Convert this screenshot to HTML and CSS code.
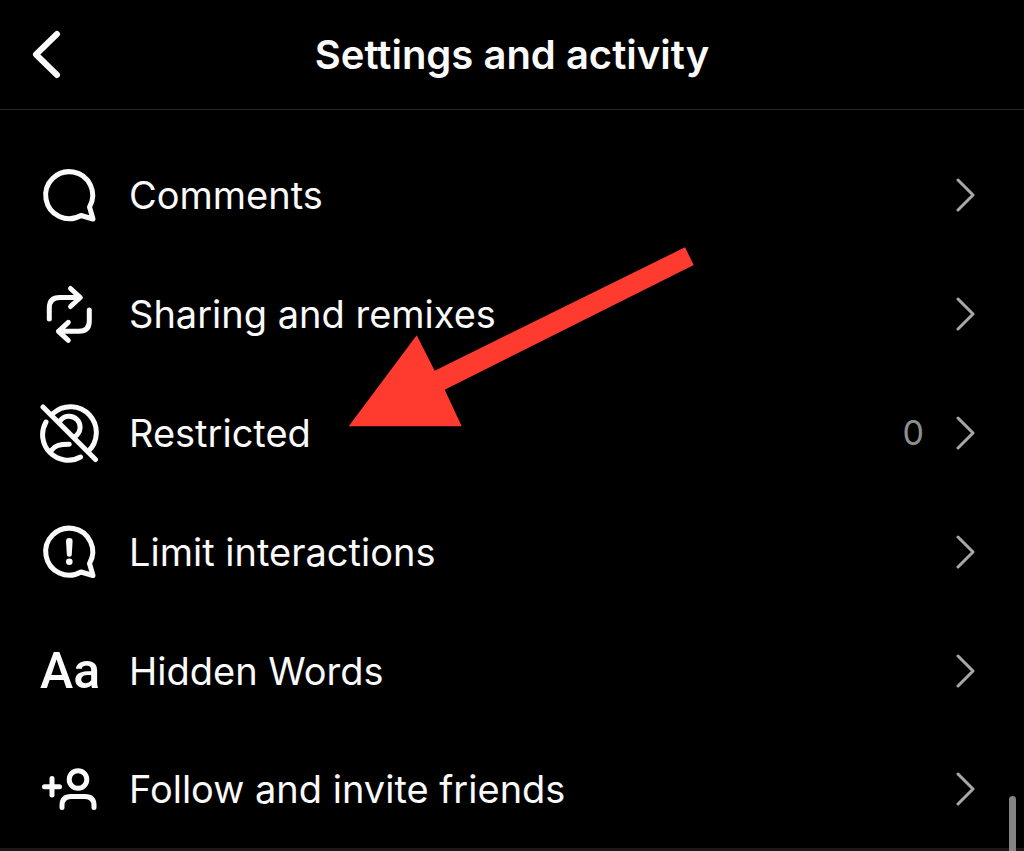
FILE: index.html
```html
<!DOCTYPE html>
<html lang="en">
<head>
<meta charset="utf-8">
<meta name="viewport" content="width=device-width, initial-scale=1">
<title>Settings and activity</title>
<link rel="stylesheet" href="styles.css">
</head>
<body class="page">
<header class="header">
  <button class="back" type="button" aria-label="Back">
    <svg class="back-icon" viewBox="0 0 34 50" aria-hidden="true"><path d="M27 4 6 24.5 27 45"/></svg>
  </button>
  <h1 class="title">Settings and activity</h1>
</header>
<main class="content">
  <ul class="list">
    <li><a class="row" href="#comments">
      <svg class="icon" viewBox="0 0 60 60" aria-hidden="true"><path d="M49.5 42A23.5 23.5 0 1 0 41 50.5L53 54Z"/></svg>
      <span class="label">Comments</span>
      <svg class="chevron" viewBox="0 0 20 36" aria-hidden="true"><path d="M3 3l15 15L3 33"/></svg>
    </a></li>
    <li><a class="row" href="#sharing">
      <svg class="icon" viewBox="0 0 60 60" aria-hidden="true"><path d="M9.3 35V24q0-10.500 10.500-10.500H40M30.500 4.500l9.800 9-9.800 9M49.300 26V37q0 10.300-10.300 10.300H18.500M28.300 38.300l-9.800 9 9.800 9"/></svg>
      <span class="label">Sharing and remixes</span>
      <svg class="chevron" viewBox="0 0 20 36" aria-hidden="true"><path d="M3 3l15 15L3 33"/></svg>
    </a></li>
    <li><a class="row" href="#restricted">
      <svg class="icon" viewBox="0 0 60 60" aria-hidden="true"><path d="M3 4 55.500 56.500M13 10.500A25.500 25.500 0 0 1 48 48.500M6 19A25.500 25.500 0 0 0 40.500 54M20 18A11 11 0 1 1 35 33.500M11.300 47.500C15 42.500 20 41.200 29.300 41.300"/></svg>
      <span class="label">Restricted</span>
      <span class="count">0</span>
      <svg class="chevron" viewBox="0 0 20 36" aria-hidden="true"><path d="M3 3l15 15L3 33"/></svg>
    </a></li>
    <li><a class="row" href="#limit">
      <svg class="icon" viewBox="0 0 60 60" aria-hidden="true"><path d="M49.500 41.500A23.500 23.500 0 1 0 41 50L53 53.500Z"/><path class="solid" d="M26 19.200a3.300 3.300 0 0 1 6.600 0l-.8 13a2.500 2.500 0 0 1-5 0Z"/><circle class="solid" cx="29.300" cy="39.700" r="3.300"/></svg>
      <span class="label">Limit interactions</span>
      <svg class="chevron" viewBox="0 0 20 36" aria-hidden="true"><path d="M3 3l15 15L3 33"/></svg>
    </a></li>
    <li><a class="row" href="#words">
      <span class="icon icon-text" aria-hidden="true">Aa</span>
      <span class="label">Hidden Words</span>
      <svg class="chevron" viewBox="0 0 20 36" aria-hidden="true"><path d="M3 3l15 15L3 33"/></svg>
    </a></li>
    <li><a class="row" href="#friends">
      <svg class="icon" viewBox="0 0 60 60" aria-hidden="true"><circle cx="38" cy="20.500" r="8.800"/><path d="M22 48.500V46.500Q22 37.500 31 37.500H45Q54 37.500 54 46.500V48.500M12 19.500V36M4.500 27.700H19.500"/></svg>
      <span class="label">Follow and invite friends</span>
      <svg class="chevron" viewBox="0 0 20 36" aria-hidden="true"><path d="M3 3l15 15L3 33"/></svg>
    </a></li>
  </ul>
  <svg class="pointer" viewBox="0 0 346 180" aria-hidden="true"><path d="M337 .3 345.700 18 96.700 142.700 113.700 179.300H.7L68.700 88.300 86.700 123.700Z"/></svg>
</main>
<div class="scrollbar"></div>
</body>
</html>
```
FILE: styles.css
```css
* {
  box-sizing: border-box;
}

.page {
  margin: 0;
  min-height: 100vh;
  background: #000;
  color: #fafafa;
  font-family: Inter, "Liberation Sans", sans-serif;
  font-variant-ligatures: none;
  overflow: hidden;
}

.header {
  display: grid;
  grid-template-columns: 64px 1fr 64px;
  align-items: center;
  padding: 30px 0 29px;
  border-bottom: 1px solid #262626;
}

.back {
  display: flex;
  justify-content: flex-end;
  padding: 0;
  border: 0;
  background: none;
  color: inherit;
}

.back-icon {
  width: 34px;
  height: 50px;
  fill: none;
  stroke: currentColor;
  stroke-width: 6;
  stroke-linecap: round;
  stroke-linejoin: round;
}

.title {
  margin: 0;
  font-size: 40px;
  font-weight: 600;
  line-height: 50px;
  text-align: center;
}

.content {
  position: relative;
  padding-top: 25px;
  border-bottom: 3px solid #1a1819;
}

.list {
  margin: 0;
  padding: 0;
  list-style: none;
}

.row {
  display: flex;
  align-items: center;
  height: 119px;
  padding: 0 49px 0 40px;
  color: inherit;
  text-decoration: none;
}

.list li:last-child .row {
  height: 118px;
}

.icon {
  flex: none;
  width: 60px;
  height: 60px;
  margin-right: 29px;
  fill: none;
  stroke: currentColor;
  stroke-width: 5;
  stroke-linecap: round;
  stroke-linejoin: round;
}

.icon .solid {
  fill: currentColor;
  stroke: none;
}

.icon-text {
  font-family: Roboto, "Liberation Sans", sans-serif;
  font-size: 50px;
  font-weight: 500;
  line-height: 60px;
  text-align: center;
}

.label {
  flex: 1;
  font-size: 38px;
  line-height: 48px;
}

.count {
  margin-right: 31px;
  color: #8e8e8e;
  font-size: 34px;
  line-height: 48px;
}

.chevron {
  flex: none;
  width: 20px;
  height: 36px;
  fill: none;
  stroke: #a8a8a8;
  stroke-width: 3;
  stroke-linecap: round;
  stroke-linejoin: round;
}

.pointer {
  position: absolute;
  top: 137px;
  left: 348px;
  width: 346px;
  height: 180px;
  fill: #ff3b30;
  pointer-events: none;
}

.scrollbar {
  position: fixed;
  right: 8px;
  bottom: 0;
  width: 7px;
  height: 55px;
  border-radius: 4px 4px 0 0;
  background: #848484;
}
```
